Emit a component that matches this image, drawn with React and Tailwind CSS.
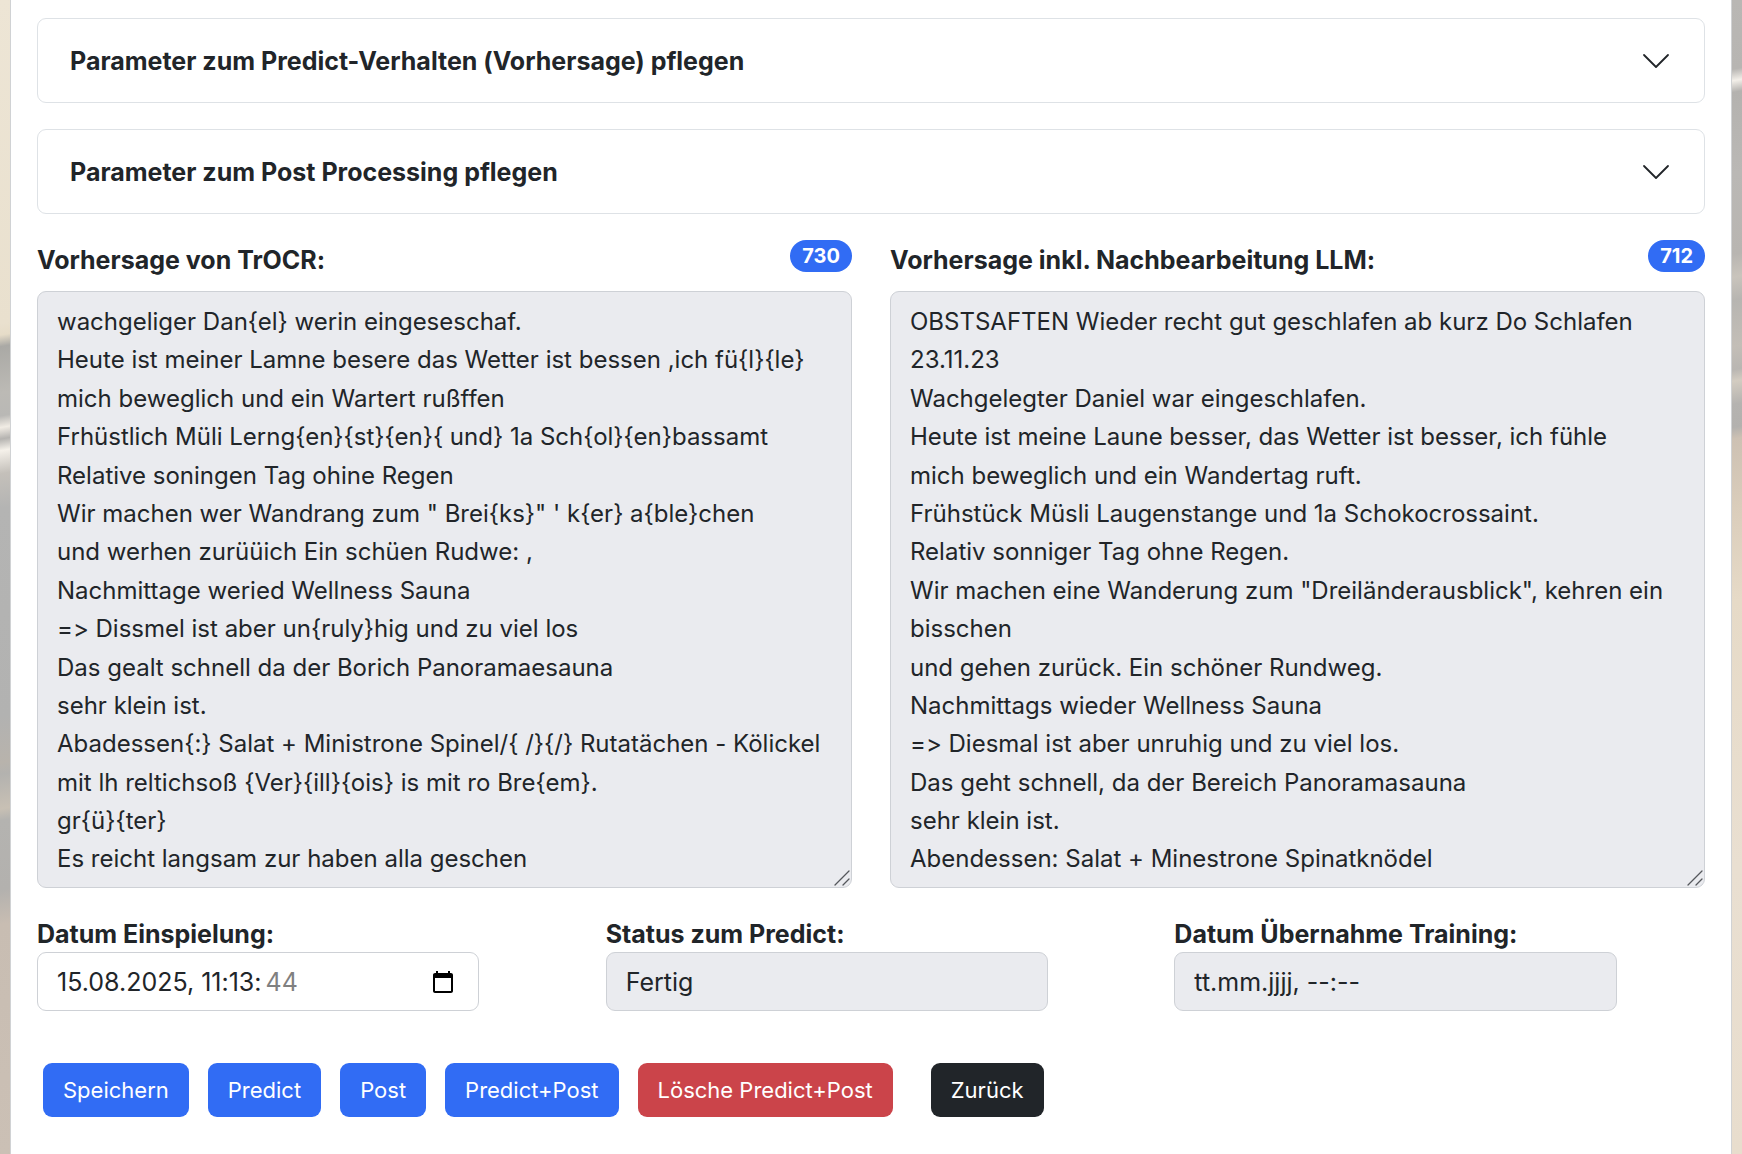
const predictionText = `wachgeliger Dan{el} werin eingeseschaf.
Heute ist meiner Lamne besere das Wetter ist bessen ,ich fü{l}{le}
mich beweglich und ein Wartert rußffen
Frhüstlich Müli Lerng{en}{st}{en}{ und} 1a Sch{ol}{en}bassamt
Relative soningen Tag ohine Regen
Wir machen wer Wandrang zum " Brei{ks}" ' k{er} a{ble}chen
und werhen zurüüich Ein schüen Rudwe: ,
Nachmittage weried Wellness Sauna
=> Dissmel ist aber un{ruly}hig und zu viel los
Das gealt schnell da der Borich Panoramaesauna
sehr klein ist.
Abadessen{:} Salat + Ministrone Spinel/{ /}{/} Rutatächen - Kölickel
mit lh reltichsoß {Ver}{ill}{ois} is mit ro Bre{em}.
gr{ü}{ter}
Es reicht langsam zur haben alla geschen`;

const llmText = `OBSTSAFTEN Wieder recht gut geschlafen ab kurz Do Schlafen
23.11.23
Wachgelegter Daniel war eingeschlafen.
Heute ist meine Laune besser, das Wetter ist besser, ich fühle
mich beweglich und ein Wandertag ruft.
Frühstück Müsli Laugenstange und 1a Schokocrossaint.
Relativ sonniger Tag ohne Regen.
Wir machen eine Wanderung zum "Dreiländerausblick", kehren ein
bisschen
und gehen zurück. Ein schöner Rundweg.
Nachmittags wieder Wellness Sauna
=> Diesmal ist aber unruhig und zu viel los.
Das geht schnell, da der Bereich Panoramasauna
sehr klein ist.
Abendessen: Salat + Minestrone Spinatknödel`;

function ParameterPanel({ title }) {
  return (
    <button
      type="button"
      aria-expanded="false"
      className="flex h-[85px] w-full items-center justify-between rounded-[9px] border border-[#dee2e6] bg-white px-8 text-left text-[25px] font-bold"
    >
      <span>{title}</span>
      <svg viewBox="0 0 16 16" className="size-8" fill="none" stroke="#212529" strokeWidth="0.9" strokeLinecap="round" strokeLinejoin="round" aria-hidden="true">
        <path d="m2 5 6 6 6-6" />
      </svg>
    </button>
  );
}

function TextPanel({ id, label, count, text }) {
  return (
    <div>
      <div className="flex items-start justify-between">
        <label htmlFor={id} className="mt-px text-[25px] leading-[38px] font-bold">{label}</label>
        <span className="rounded-full bg-[#316cf4] px-3 text-[20px] leading-8 font-bold text-white">{count}</span>
      </div>
      <div className="relative mt-3">
        <textarea
          id={id}
          readOnly
          wrap="off"
          defaultValue={text}
          className="block h-[597px] w-full resize-y overflow-hidden rounded-[9px] border border-[#ced1d6] bg-[#eaebef] px-[19px] py-[11px] outline-none [&::-webkit-resizer]:hidden"
        />
        <svg viewBox="0 0 16 16" className="pointer-events-none absolute right-0.5 bottom-0.5 size-4" fill="none" stroke="#55585c" strokeWidth="1.3" strokeLinecap="round" aria-hidden="true">
          <path d="M1 15 15 1M9 15l6-6" />
        </svg>
      </div>
    </div>
  );
}

function Action({ className, children }) {
  return (
    <button type="button" className={`rounded-[9px] px-5 text-[22px] leading-[54px] text-white ${className}`}>
      {children}
    </button>
  );
}

const field = "block h-[59px] w-5/6 rounded-[9px] border border-[#ced1d6] px-[19px] text-[25px] outline-none";
const fieldLabel = "block text-[25px] leading-9 font-bold";

export default function App() {
  return (
    <div className="flex min-h-screen justify-between bg-white font-['Inter',sans-serif] text-[24px] leading-[1.6] text-[#212529] [font-feature-settings:'calt'_0]">
      <div className="w-[10px] shrink-0 bg-[linear-gradient(170deg,#ede5d5_0%,#e9e0ce_28%,#e6dcc8_29%,#aaa9a5_30%,#bcbab5_34%,#b9b8b5_36%,#f1ece4_37%,#b5b3b0_38%,#f5f1ea_39%,#c4c0ba_41%,#b4b4b3_44%,#b2b2b1_62%,#b8b3ac_66%,#b3b2af_67%,#c8c0b4_70%,#b4b3b0_71%,#b3b1ae_77%,#c8bdb2_80%,#cbc0b5_100%)]" />
      <main className="min-w-0 grow border-x border-[#d0d2d4] px-[26px] pt-[18px] pb-9">
        <div className="flex flex-col gap-[26px]">
          <ParameterPanel title="Parameter zum Predict-Verhalten (Vorhersage) pflegen" />
          <ParameterPanel title="Parameter zum Post Processing pflegen" />
        </div>
        <div className="mt-[26px] grid grid-cols-2 gap-x-[38px]">
          <TextPanel id="trocr" label="Vorhersage von TrOCR:" count="730" text={predictionText} />
          <TextPanel id="llm" label="Vorhersage inkl. Nachbearbeitung LLM:" count="712" text={llmText} />
        </div>
        <div className="mt-7 grid grid-cols-3 gap-x-[38px]">
          <div>
            <label htmlFor="imported" className={fieldLabel}>Datum Einspielung:</label>
            <div className={`${field} flex! items-center gap-1 bg-white`}>
              <input id="imported" defaultValue="15.08.2025, 11:13:" className="field-sizing-content outline-none" />
              <input aria-label="Sekunden" defaultValue="44" className="field-sizing-content text-[#808080] outline-none" />
              <button type="button" aria-label="Datum auswählen" className="mr-1 ml-auto">
                <svg viewBox="0 0 24 24" className="size-6" aria-hidden="true">
                  <path fill="#000" d="M20 3h-1V1h-2v2H7V1H5v2H4c-1.1 0-2 .9-2 2v16c0 1.1.9 2 2 2h16c1.1 0 2-.9 2-2V5c0-1.100-.9-2-2-2zm0 18H4V8h16v13z" />
                </svg>
              </button>
            </div>
          </div>
          <div>
            <label htmlFor="status" className={fieldLabel}>Status zum Predict:</label>
            <input id="status" readOnly defaultValue="Fertig" className={`${field} bg-[#eaebef]`} />
          </div>
          <div>
            <label htmlFor="training" className={fieldLabel}>Datum Übernahme Training:</label>
            <input id="training" readOnly defaultValue="tt.mm.jjjj, --:--" className={`${field} bg-[#eaebef]`} />
          </div>
        </div>
        <div className="mt-[52px] ml-[6px] flex gap-[19px]">
          <Action className="bg-[#316cf4]">Speichern</Action>
          <Action className="bg-[#316cf4]">Predict</Action>
          <Action className="bg-[#316cf4]">Post</Action>
          <Action className="bg-[#316cf4]">Predict+Post</Action>
          <Action className="bg-[#cb444a]">Lösche Predict+Post</Action>
          <Action className="ml-[19px] bg-[#212529]">Zurück</Action>
        </div>
      </main>
      <div className="w-[10px] shrink-0 bg-[linear-gradient(170deg,#b9b7b4_0%,#b7b5b2_6%,#f3efe9_7%,#b4b2af_8%,#bab8b5_15%,#b8b5b1_22%,#c9c4bc_24%,#b7b5b1_26%,#c3beb7_30%,#b9b6b2_32%,#d3ccc1_33%,#b5b3b0_35%,#b3b1ae_37%,#cdc1b3_38%,#dacdbb_44%,#e6dac7_52%,#e9dfd1_75%,#e8ddcd_100%)]" />
    </div>
  );
}
